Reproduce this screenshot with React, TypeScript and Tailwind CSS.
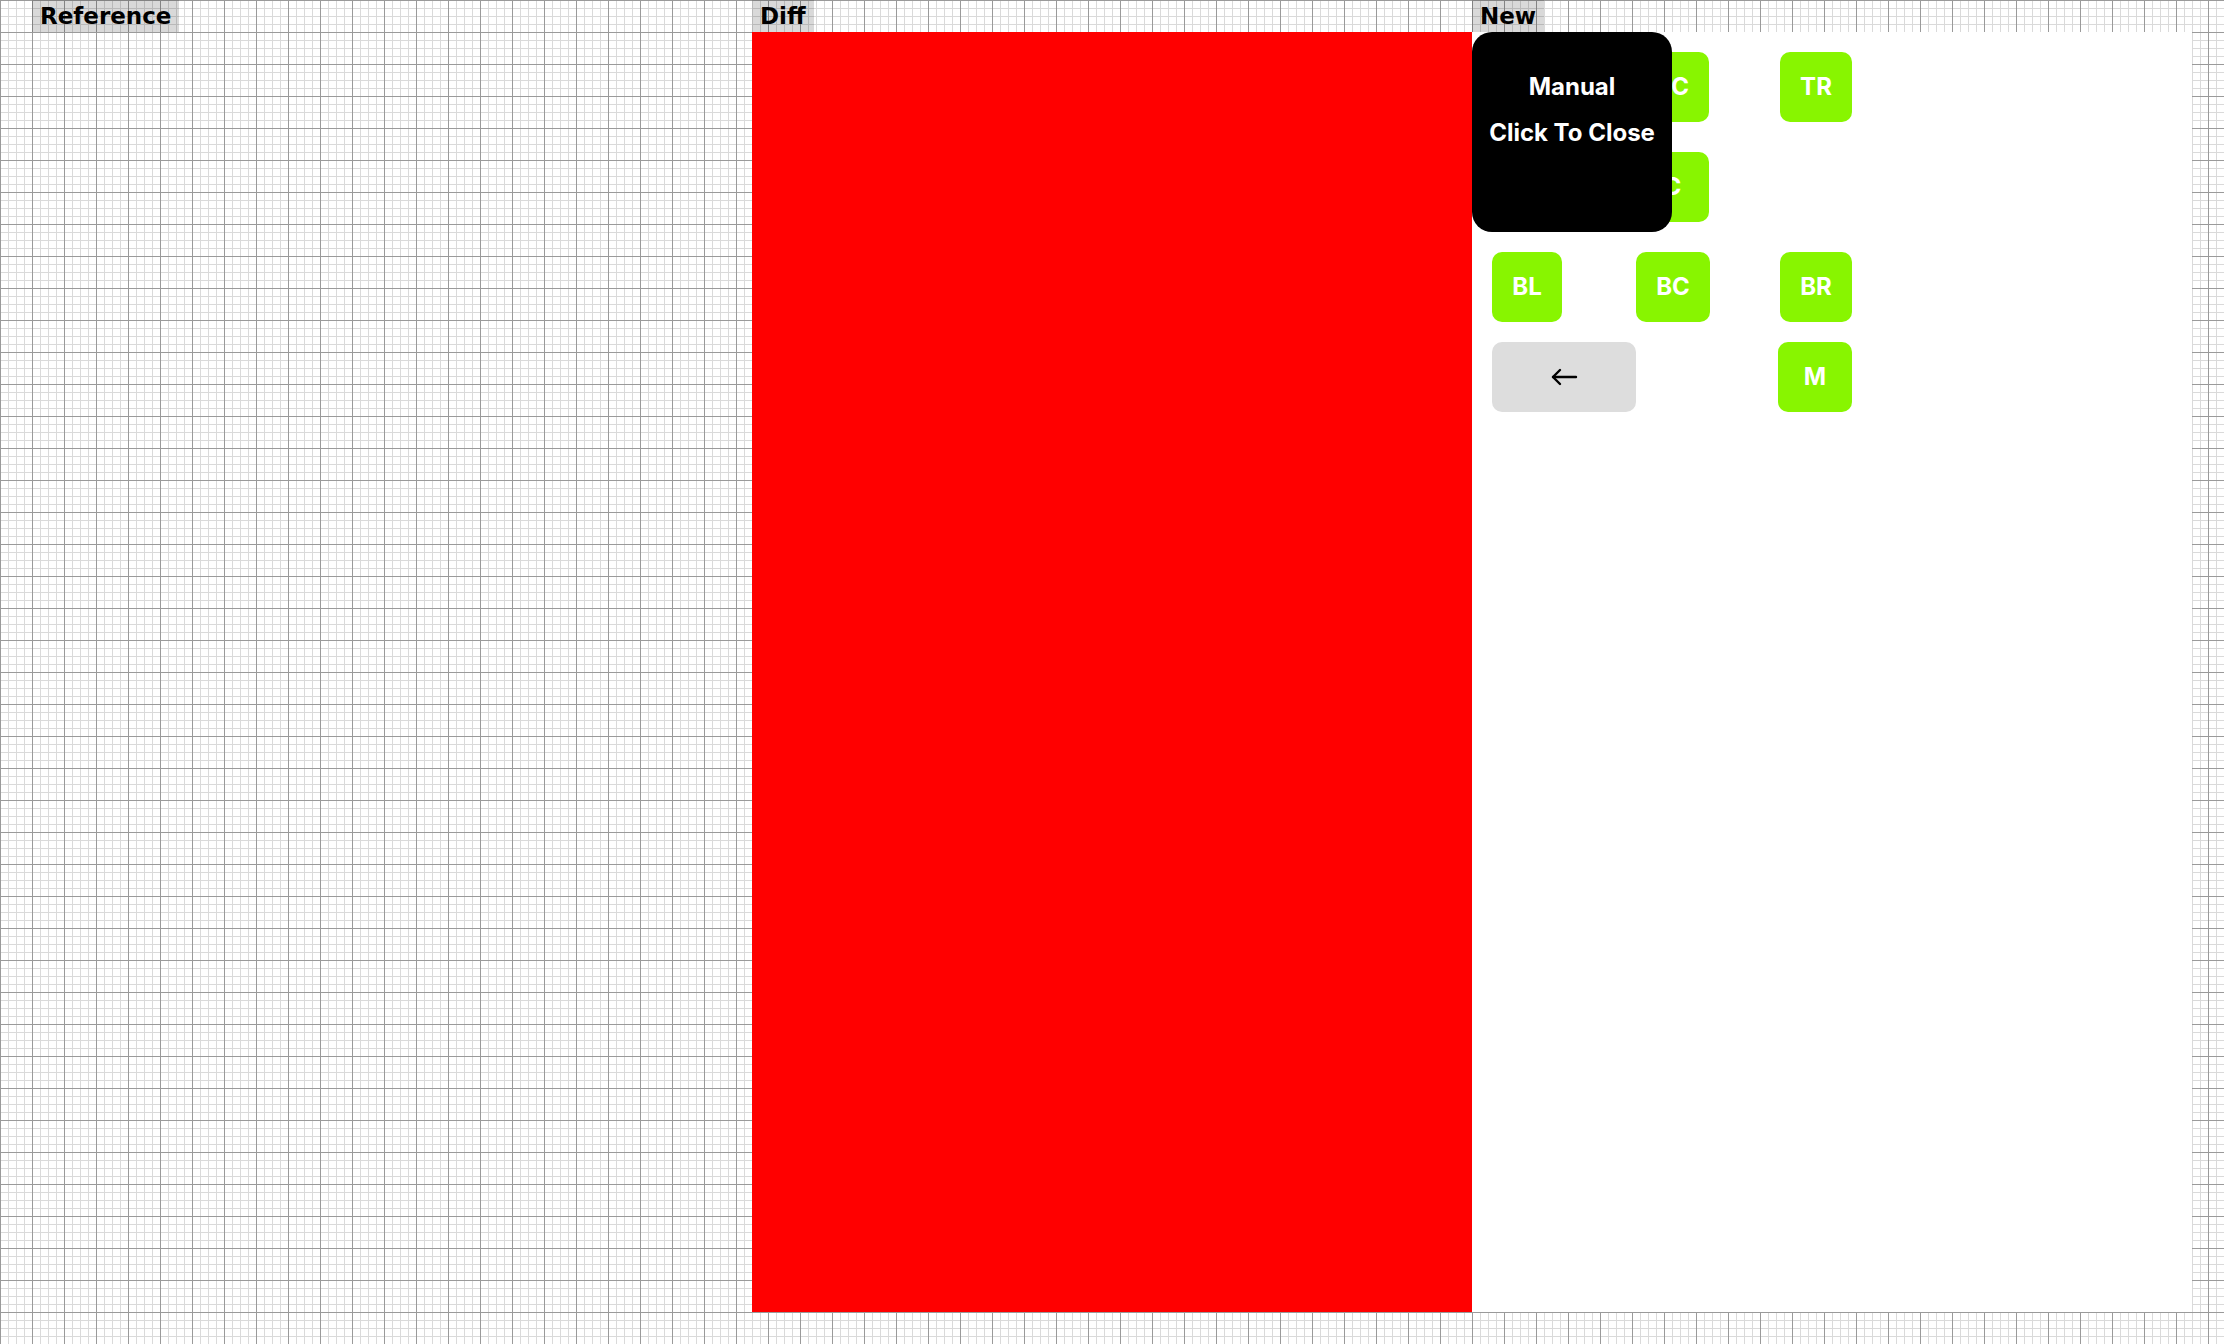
const gridBg =
  "bg-[image:linear-gradient(to_right,#9a9a9a_1px,transparent_1px),linear-gradient(to_bottom,#9a9a9a_1px,transparent_1px),linear-gradient(to_right,#dadada_1px,transparent_1px),linear-gradient(to_bottom,#dadada_1px,transparent_1px)] bg-[size:32px_32px,32px_32px,8px_8px,8px_8px]";

function Label({ text }: { text: string }) {
  return (
    <div className="h-8 w-fit bg-black/15 px-2 font-['DejaVu_Sans',sans-serif] text-[23px] font-bold leading-8 text-black">
      {text}
    </div>
  );
}

function Btn({ label, className = "" }: { label: string; className?: string }) {
  return (
    <div
      className={`h-[70px] rounded-[10px] bg-[#88f500] py-5 text-center font-['Inter',sans-serif] text-2xl font-bold leading-[30px] text-white ${className}`}
    >
      {label}
    </div>
  );
}

function BackArrow() {
  return (
    <svg width="28" height="18" viewBox="0 0 28 18" fill="none" stroke="#000" strokeWidth="2.4" strokeLinecap="round" strokeLinejoin="round">
      <line x1="3" y1="9" x2="26" y2="9" />
      <polyline points="10,2 3,9 10,16" />
    </svg>
  );
}

export default function App() {
  return (
    <div className={`h-[1344px] w-[2224px] ${gridBg}`}>
      <div className="flex pl-8">
        {/* Reference */}
        <div className="flex w-[720px] flex-col">
          <Label text="Reference" />
          <div className="h-[1280px]" />
        </div>

        {/* Diff */}
        <div className="flex w-[720px] flex-col">
          <Label text="Diff" />
          <div className="h-[1280px] bg-[#ff0000]" />
        </div>

        {/* New */}
        <div className="flex w-[720px] flex-col">
          <Label text="New" />
          <div className="relative h-[1280px] bg-white p-5">
            <div className="grid w-[360px] grid-cols-[144px_144px_minmax(0,1fr)] gap-y-[30px]">
              <Btn label="TL" className="w-[70px]" />
              <Btn label="TC" className="w-[73px]" />
              <Btn label="TR" className="w-[72px] justify-self-end" />
              <Btn label="L" className="w-[70px]" />
              <Btn label="C" className="w-[73px]" />
              <div />
              <Btn label="BL" className="w-[70px]" />
              <Btn label="BC" className="w-[74px]" />
              <Btn label="BR" className="w-[72px] justify-self-end" />
            </div>
            <div className="mt-5 grid w-[360px] grid-cols-[144px_144px_minmax(0,1fr)]">
              <div className="flex h-[70px] items-center justify-center rounded-[10px] bg-[#dddddd]">
                <BackArrow />
              </div>
              <Btn label="M" className="col-span-2 w-[74px] justify-self-end" />
            </div>

            {/* popup */}
            <div className="absolute left-0 top-0 flex h-[200px] w-[200px] flex-col items-center gap-[17px] rounded-[20px] bg-black pt-10 font-['Inter',sans-serif] text-2xl font-bold leading-[29px] text-white">
              <div>Manual</div>
              <div>Click To Close</div>
            </div>
          </div>
        </div>
      </div>
    </div>
  );
}
